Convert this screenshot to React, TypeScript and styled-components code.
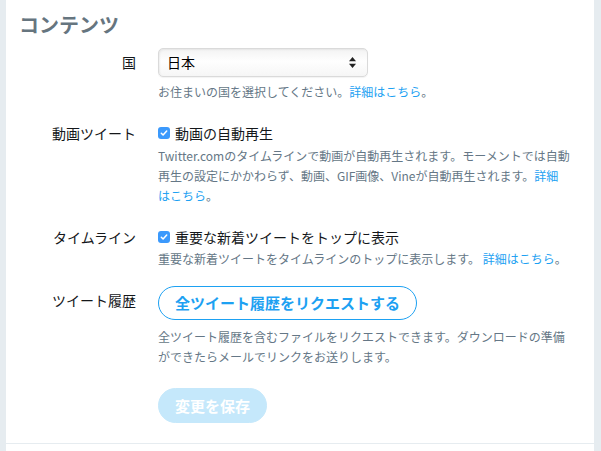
import styled, { createGlobalStyle } from 'styled-components';

const GlobalStyle = createGlobalStyle`
  html, body {
    margin: 0;
    padding: 0;
    background: #fff;
  }
  body {
    font-family: "Noto Sans CJK JP", "Noto Sans", sans-serif;
    color: #14171a;
  }
  * {
    box-sizing: border-box;
  }
`;

const Page = styled.div`
  display: flex;
  min-height: 451px;
  background: #e6ecf0;
  padding: 0 7px 0 6px;
`;

const Panel = styled.div`
  flex: 1;
  background: #fff;
`;

const Section = styled.div`
  padding: 13px 24px 20px 13px;
  border-bottom: 1px solid #e6ecf0;
`;

const Heading = styled.h2`
  margin: 0 0 11px;
  font-size: 20px;
  line-height: 24px;
  font-weight: 700;
  color: #66757f;
`;

const Row = styled.div<{ $gap?: number }>`
  display: grid;
  grid-template-columns: 117px 1fr;
  column-gap: 22px;
  margin-bottom: ${({ $gap }) => $gap ?? 21}px;
`;

const Label = styled.div<{ $top?: number }>`
  text-align: right;
  font-size: 14px;
  line-height: 20px;
  padding-top: ${({ $top }) => $top ?? 0}px;
`;

const Field = styled.div`
  display: flex;
  flex-direction: column;
  align-items: flex-start;
`;

const SelectBox = styled.div`
  position: relative;
  width: 210px;
  height: 29px;
  border: 1px solid #dadada;
  border-radius: 5px;
  background: linear-gradient(to bottom, #f3f3f3 0%, #fefefe 45%, #f6f6f6 100%);
  box-shadow: inset 1px 1px 2px rgba(0, 0, 0, 0.06), 0 1px 1px rgba(0, 0, 0, 0.05);
`;

const SelectText = styled.div`
  padding-left: 8px;
  font-size: 14px;
  line-height: 27px;
  color: #000;
`;

const SelectArrows = styled.svg`
  position: absolute;
  right: 11px;
  top: 8px;
`;

const Help = styled.p<{ $top?: number }>`
  margin: ${({ $top }) => $top ?? 0}px 0 0;
  font-size: 12px;
  line-height: 20px;
  color: #657786;
`;

const Link = styled.a`
  color: #1da1f2;
  text-decoration: none;
`;

const CheckLine = styled.label`
  display: flex;
  align-items: center;
  gap: 5px;
  font-size: 14px;
  line-height: 20px;
`;

const CheckBox = styled.span`
  display: inline-flex;
  align-items: center;
  justify-content: center;
  width: 12px;
  height: 12px;
  border-radius: 3px;
  background: #3b99fc;
`;

const PillButton = styled.button<{ $primary?: boolean }>`
  height: ${({ $primary }) => ($primary ? 35 : 34)}px;
  padding: 0 16px;
  border-radius: 100px;
  border: 1px solid ${({ $primary }) => ($primary ? '#c5e8fb' : '#1da1f2')};
  background: ${({ $primary }) => ($primary ? '#c5e8fb' : '#fff')};
  color: ${({ $primary }) => ($primary ? '#fff' : '#1da1f2')};
  font-family: inherit;
  font-size: 15px;
  font-weight: 700;
  line-height: 20px;
  cursor: pointer;
`;

const Actions = styled.div`
  padding-left: 139px;
`;

const Check = () => (
  <CheckBox>
    <svg width="8" height="8" viewBox="0 0 8 8">
      <path d="M1.3 4.2 L3.1 6 L6.7 2" fill="none" stroke="#fff" strokeWidth="1.5" strokeLinecap="round" strokeLinejoin="round" />
    </svg>
  </CheckBox>
);

export default function App() {
  return (
    <>
      <GlobalStyle />
      <Page>
        <Panel>
          <Section>
            <Heading>コンテンツ</Heading>

            <Row>
              <Label $top={4}>国</Label>
              <Field>
                <SelectBox>
                  <SelectText>日本</SelectText>
                  <SelectArrows width="7" height="11" viewBox="0 0 7 11">
                    <path d="M3.5 0 L7 4.2 L0 4.2 Z" fill="#222" />
                    <path d="M3.5 11 L7 6.8 L0 6.8 Z" fill="#222" />
                  </SelectArrows>
                </SelectBox>
                <Help $top={5}>
                  お住まいの国を選択してください。<Link href="#">詳細はこちら</Link>。
                </Help>
              </Field>
            </Row>

            <Row>
              <Label>動画ツイート</Label>
              <Field>
                <CheckLine>
                  <Check />
                  動画の自動再生
                </CheckLine>
                <Help $top={3}>
                  Twitter.comのタイムラインで動画が自動再生されます。モーメントでは自動再生の設定にかかわらず、動画、GIF画像、Vineが自動再生されます。<Link href="#">詳細はこちら</Link>。
                </Help>
              </Field>
            </Row>

            <Row $gap={17}>
              <Label>タイムライン</Label>
              <Field>
                <CheckLine>
                  <Check />
                  重要な新着ツイートをトップに表示
                </CheckLine>
                <Help $top={2}>
                  重要な新着ツイートをタイムラインのトップに表示します。 <Link href="#">詳細はこちら</Link>。
                </Help>
              </Field>
            </Row>

            <Row>
              <Label $top={4}>ツイート履歴</Label>
              <Field>
                <PillButton>全ツイート履歴をリクエストする</PillButton>
                <Help $top={7}>
                  全ツイート履歴を含むファイルをリクエストできます。ダウンロードの準備ができたらメールでリンクをお送りします。
                </Help>
              </Field>
            </Row>

            <Actions>
              <PillButton $primary>変更を保存</PillButton>
            </Actions>
          </Section>
        </Panel>
      </Page>
    </>
  );
}
